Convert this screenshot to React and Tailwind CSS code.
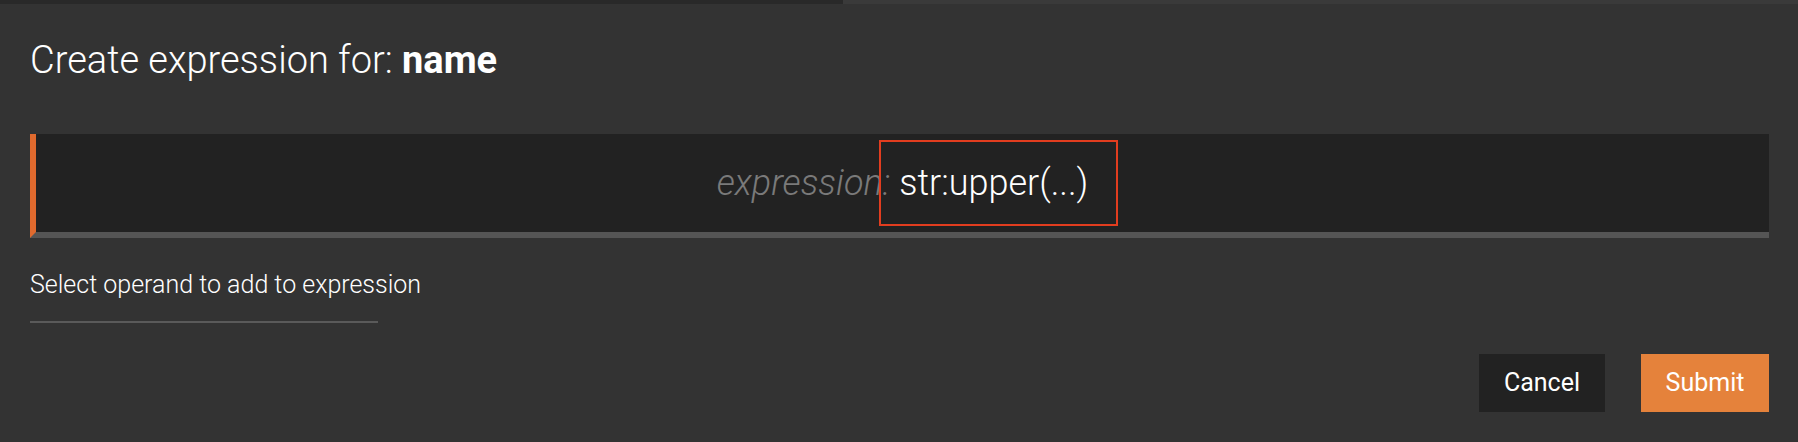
export default function App() {
  return (
    <div className="w-[1798px] h-[442px] bg-[#333333] font-['Roboto',sans-serif] text-white overflow-hidden">
      <div className="flex h-1">
        <div className="w-[843px] bg-[#292929]" />
        <div className="flex-1 bg-[#3a3a3a]" />
      </div>
      <div className="pl-[30px] pr-[29px]">
        <h1 className="mt-[37px] text-[38px] leading-[38px] font-light">
          Create expression for: <span className="font-bold">name</span>
        </h1>
        <div className="mt-[55px] h-[104px] bg-[#222222] border-l-[6px] border-l-[#e06a2e] border-b-[6px] border-b-[#555555] flex items-center justify-center">
          <div className="flex items-center text-[36px] leading-[36px] font-light">
            <span className="italic text-[#7a7a7a]">expression:</span>
            <span className="relative ml-[9px]">
              str:upper(...)
              <span className="absolute left-[-20px] right-[-30px] top-[-25px] bottom-[-25px] border-2 border-[#e23d1f]" />
            </span>
          </div>
        </div>
        <div className="mt-[33px] w-[348px] border-b-2 border-[#5a5a5a] pb-[22px]">
          <span className="block text-[25px] leading-[28px] font-light whitespace-nowrap">Select operand to add to expression</span>
        </div>
        <div className="mt-[31px] flex justify-end gap-[36px]">
          <button className="w-[126px] h-[58px] bg-[#222222] text-[25px] text-white">Cancel</button>
          <button className="w-[128px] h-[58px] bg-[#e5823b] text-[25px] text-white">Submit</button>
        </div>
      </div>
    </div>
  );
}
